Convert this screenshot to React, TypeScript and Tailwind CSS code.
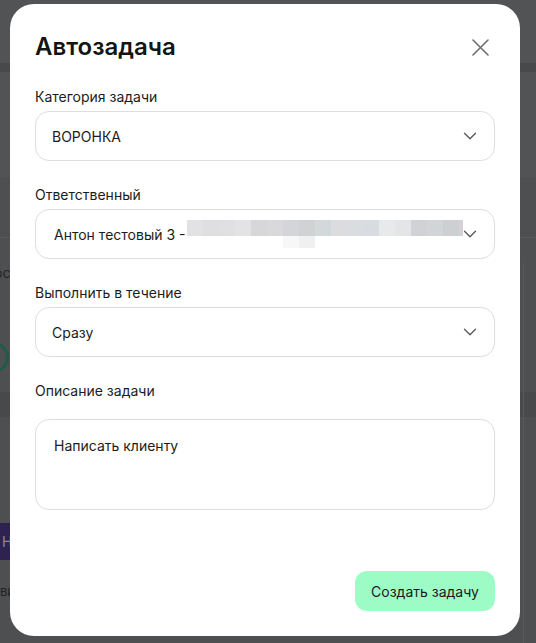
import React from "react";
import { ChevronDown } from "lucide-react";

const mosaicTop = [
  "bg-[#e2e2e5]",
  "bg-[#dfdfe2]",
  "bg-[#e0e0e3]",
  "bg-[#e3e3e6]",
  "bg-[#d7d7da]",
  "bg-[#d9d9dc]",
  "bg-[#d3d5d8]",
  "bg-[#d0d2d4]",
  "bg-[#d3d8db]",
  "bg-[#dcdcde]",
  "bg-[#d9dde0]",
  "bg-[#d8dce0]",
  "bg-[#e8e9eb]",
  "bg-[#e4e5e7]",
  "bg-[#d0d2d5]",
  "bg-[#d2d5d8]",
  "bg-[#cdd0d3]",
  "bg-[#d4d2d4]",
];

const mosaicBottom = [
  "bg-white",
  "bg-white",
  "bg-white",
  "bg-white",
  "bg-white",
  "bg-white",
  "bg-[#f7f7f8]",
  "bg-[#eef0f2]",
  "bg-white",
  "bg-white",
  "bg-white",
  "bg-white",
  "bg-white",
  "bg-white",
  "bg-white",
  "bg-white",
  "bg-white",
  "bg-white",
];

function Label({ children }: { children: React.ReactNode }) {
  return (
    <div className="h-5 text-[14px] leading-5 text-[#1c1c1c]">{children}</div>
  );
}

function SelectBox({ children }: { children: React.ReactNode }) {
  return (
    <div className="mt-1 flex h-[50px] items-center rounded-[14px] border border-[#dedede] pl-[16px] pr-[13px]">
      <div className="flex min-w-0 flex-1 items-center text-[14px] text-[#1c1c1c]">
        {children}
      </div>
      <ChevronDown size={22} strokeWidth={1.5} className="relative shrink-0 text-[#5a5a5a]" />
    </div>
  );
}

function Mosaic() {
  return (
    <div className="flex h-[28px] w-[276px] shrink-0 flex-col overflow-hidden">
      <div className="flex h-4">
        {mosaicTop.map((c, i) => (
          <div key={i} className={`h-4 w-4 shrink-0 ${c}`} />
        ))}
      </div>
      <div className="flex h-3">
        {mosaicBottom.map((c, i) => (
          <div key={i} className={`h-3 w-4 shrink-0 ${c}`} />
        ))}
      </div>
    </div>
  );
}

export default function App() {
  return (
    <div
      className="relative h-[643px] w-[536px] overflow-hidden bg-[#4e4f51] pl-[10px] pt-[4px]"
      style={{ fontFamily: "Inter, 'Noto Sans', sans-serif" }}
    >
      {/* dimmed page behind the dialog */}
      <div className="absolute left-0 top-0 h-[178px] w-full bg-[#525355]" />
      <div className="absolute left-0 top-[63px] h-[9px] w-full bg-[#48494b]" />
      <div className="absolute left-0 top-[237px] h-px w-full bg-[#58595b]" />
      <div className="absolute left-[-6px] top-[262px] text-[14px] text-[#262626]">ос</div>
      <div className="absolute left-[-22px] top-[342px] h-[31px] w-[31px] rounded-full border-[3px] border-[#1f5c47]" />
      <div className="absolute left-0 top-[392px] h-[25px] w-full bg-[#48494b]" />
      <div className="absolute left-0 top-[523px] flex h-[37px] w-[14px] items-center bg-[#2e2350] pl-[2px] text-[14px] text-[#8a8699]">
        Н
      </div>
      <div className="absolute left-[0px] top-[582px] text-[13px] text-[#222]">ви</div>
      <div className="absolute left-[523px] top-[263px] h-[380px] w-px bg-[#5a5b5d]" />

      {/* dialog */}
      <div className="relative flex h-[632px] w-[510px] flex-col rounded-[24px] bg-white px-[25px] pb-[25px] pt-[27px]">
        <div className="flex h-8 items-center justify-between">
          <h2 className="text-[24px] font-semibold leading-8 text-[#141414]">
            Автозадача
          </h2>
          <button className="flex h-[30px] w-[30px] items-center justify-center">
            <svg width="17" height="17" viewBox="0 0 17 17" fill="none">
              <path
                d="M1 1 16 16M16 1 1 16"
                stroke="#6e6e6e"
                strokeWidth="1.6"
                strokeLinecap="round"
              />
            </svg>
          </button>
        </div>

        <div className="mt-6">
          <Label>Категория задачи</Label>
          <SelectBox>ВОРОНКА</SelectBox>
        </div>

        <div className="mt-6">
          <Label>Ответственный</Label>
          <SelectBox>
            <span className="ml-[2px] mr-[2px] shrink-0">Антон тестовый 3 -</span>
            <Mosaic />
          </SelectBox>
        </div>

        <div className="mt-6">
          <Label>Выполнить в течение</Label>
          <SelectBox>Сразу</SelectBox>
        </div>

        <div className="mt-6">
          <Label>Описание задачи</Label>
          <div className="mt-[18px] h-[91px] rounded-[14px] border border-[#dedede] px-[18px] pt-[16px] text-[14px] leading-5 text-[#1c1c1c]">
            Написать клиенту
          </div>
        </div>

        <div className="mt-auto flex justify-end">
          <button className="h-10 w-[140px] rounded-[12px] bg-[#9dfcc5] text-[14px] text-[#1a1a1a]">
            Создать задачу
          </button>
        </div>
      </div>
    </div>
  );
}
